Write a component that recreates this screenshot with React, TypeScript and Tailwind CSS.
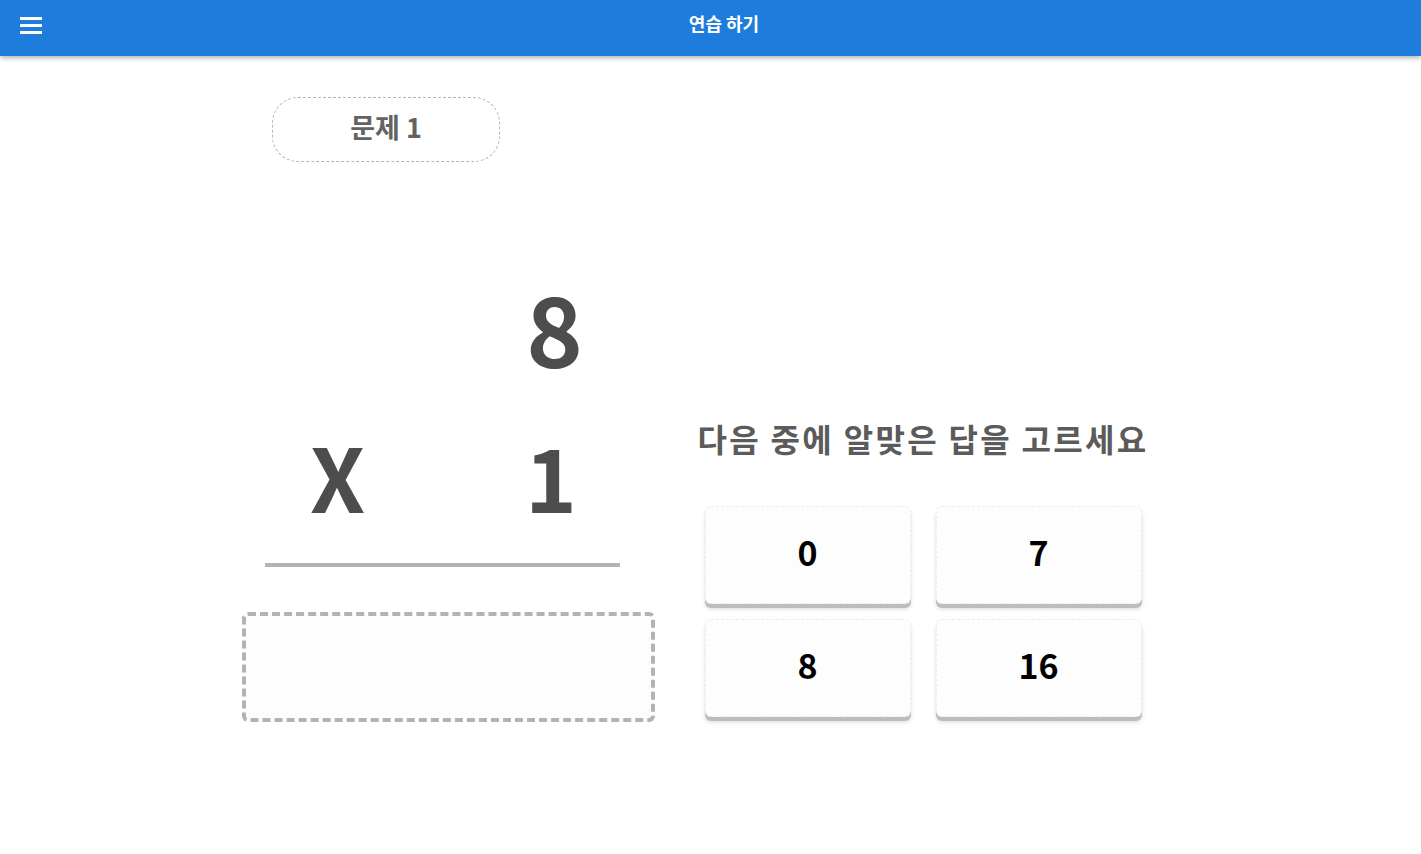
import React from "react";

const KR = { fontFamily: '"Noto Sans CJK KR", "Noto Sans", sans-serif' };

function Choice({ label }: { label: string }) {
  return (
    <button
      className="w-[206px] h-[98px] pb-[7px] rounded-[6px] bg-[#fdfdfd] border border-dashed border-[#ececec] shadow-[0_4px_0_#bdbdbd,0_5px_4px_rgba(0,0,0,0.15)] flex items-center justify-center text-[34px] font-bold text-black"
      style={KR}
    >
      {label}
    </button>
  );
}

export default function App() {
  return (
    <div className="min-h-[854px] bg-white" style={KR}>
      <header className="h-[56px] bg-[#1e7ddc] relative shadow-[0_2px_5px_rgba(0,0,0,0.3)]">
        <div className="h-[48px] flex items-center pt-[2px]">
          <div className="ml-[20px] flex flex-col gap-[4px]">
            <span className="block w-[22px] h-[3px] bg-white" />
            <span className="block w-[22px] h-[3px] bg-white" />
            <span className="block w-[22px] h-[3px] bg-white" />
          </div>
        </div>
        <div className="absolute left-0 right-0 top-0 h-[46px] pl-[27px] flex items-center justify-center text-white text-[18px] font-bold pointer-events-none">
          연습 하기
        </div>
      </header>

      <div className="pl-[272px] pt-[41px]">
        <div className="w-[228px] h-[65px] pb-[4px] rounded-[26px] border border-dashed border-[#b5b5b5] flex items-center justify-center text-[27px] font-bold text-[#636363]">
          문제 1
        </div>
      </div>

      <div className="flex pl-[242px] mt-[110px]">
        <div className="w-[413px] flex flex-col">
          <div className="ml-[23px] w-[355px] flex flex-col">
            <div className="h-[110px] flex items-center justify-end pr-[37px] text-[96px] font-bold text-[#4d4d4d] leading-none">
              8
            </div>
            <div className="h-[181px] flex items-end justify-between pl-[45px] pr-[43px] pb-[44px] text-[88px] font-bold text-[#4d4d4d] leading-none">
              <span>X</span>
              <span>1</span>
            </div>
            <div className="h-[4px] bg-[#b3b3b3]" />
          </div>
          <div className="mt-[45px] w-[413px] h-[110px] rounded-[6px] border-[4px] border-dashed border-[#b3b3b3] bg-[#fdfdfd]" />
        </div>

        <div className="ml-[43px] w-[450px] flex flex-col items-center pt-[150px]">
          <div className="whitespace-nowrap text-[32px] font-bold text-[#5b5b5b] tracking-[2.3px] leading-none">
            다음 중에 알맞은 답을 고르세요
          </div>
          <div className="mt-[52px] grid grid-cols-2 gap-x-[25px] gap-y-[15px]">
            <Choice label="0" />
            <Choice label="7" />
            <Choice label="8" />
            <Choice label="16" />
          </div>
        </div>
      </div>
    </div>
  );
}
